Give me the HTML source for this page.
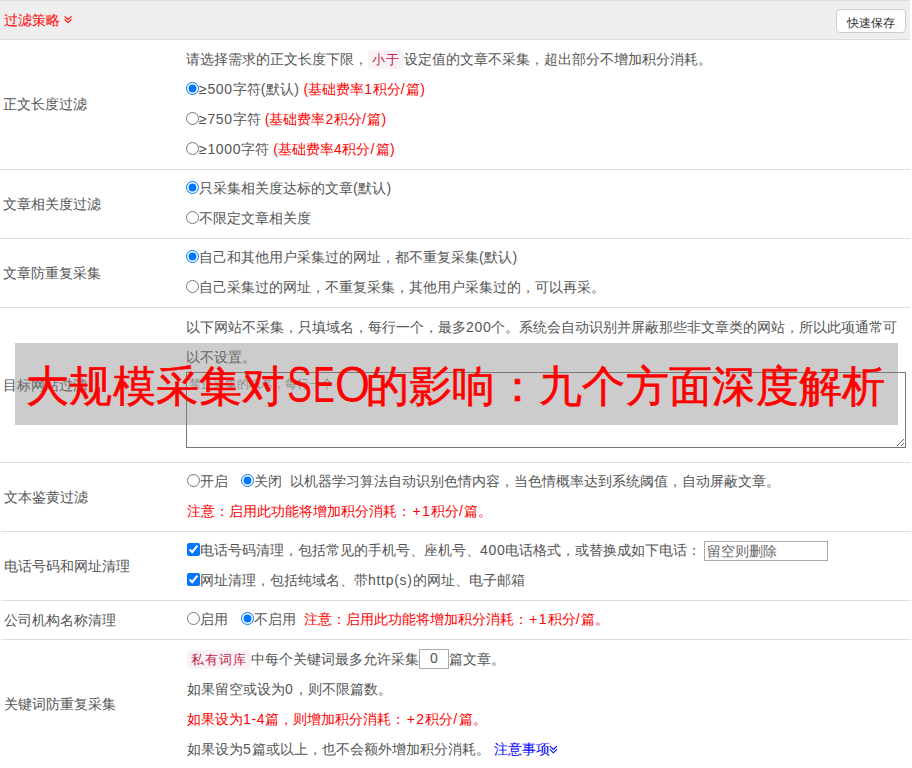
<!DOCTYPE html>
<html><head><meta charset="utf-8">
<style>
html,body{margin:0;padding:0;background:#fff;}
body{width:912px;height:768px;overflow:hidden;position:relative;font-family:"Liberation Sans",sans-serif;font-size:14px;color:#555;}
.hdr{position:absolute;left:0;top:0;width:910px;height:38px;background:#eee;border-top:1px solid #ddd;border-bottom:1px solid #ddd;}
.hdr .t{position:absolute;left:4px;top:4px;line-height:30px;color:#f00;white-space:nowrap;}
.hdr svg{position:absolute;left:64px;top:14px;}
.btn{position:absolute;left:836px;top:8px;width:68px;height:22px;border:1px solid #ccc;border-radius:4px;background:#fff;color:#333;font-size:12px;line-height:26px;text-align:center;}
.row{position:absolute;left:0;width:910px;border-bottom:1px solid #ddd;}
.lab{position:absolute;left:3px;line-height:30px;white-space:nowrap;}
.ln{position:absolute;left:186px;line-height:30px;white-space:nowrap;}
.red{color:#f00;}
.l{letter-spacing:0.7px;}
input[type=radio],input[type=checkbox]{margin:0;vertical-align:middle;position:relative;top:-2px;}
input.sp{margin-left:13px;}
code{font-family:"Liberation Sans",sans-serif;font-size:13px;letter-spacing:1px;color:#c7254e;background:#f9f2f4;border-radius:4px;padding:2px 4px 2px 4px;}
.banner{position:absolute;left:15px;top:343px;width:883px;height:82px;background:rgba(128,128,128,0.4);}
.banner .bt{position:absolute;left:11px;top:2px;letter-spacing:0.3px;line-height:82px;font-size:43px;color:#f00;white-space:nowrap;-webkit-text-stroke:0.6px #f00;}
.seo{display:inline-block;width:77px;margin-left:3px;}
.lt{position:absolute;top:0;line-height:60px;font-size:50px;color:#f00;transform-origin:0 0;white-space:nowrap;}
textarea{position:absolute;left:186px;top:372px;width:714px;height:69px;margin:0;border:1px solid #777;border-radius:0;padding:3px 2px 2px 2px;font-family:"Liberation Sans",sans-serif;font-size:12px;line-height:16px;resize:both;}
textarea::placeholder{color:#999;}
.inp{position:absolute;border:1px solid #a9a9a9;background:#fff;font-size:14px;color:#666;line-height:18px;white-space:nowrap;}
.blue{color:#00f;}
</style></head><body>
<div class="hdr"><span class="t">过滤策略</span>
<svg width="9" height="9" viewBox="0 0 9 9"><path d="M0.6 1.3 L4.1 4.4 L7.6 1.3 M0.6 4.4 L4.1 7.5 L7.6 4.4" fill="none" stroke="#f00" stroke-width="1.1"/></svg>
<div class="btn">快速保存</div></div>

<div class="row" style="top:40px;height:129px"></div>
<div class="lab" style="top:89px">正文长度过滤</div>
<div class="ln" style="top:44px">请选择需求的正文长度下限，<code>小于</code>设定值的文章不采集，超出部分不增加积分消耗。</div>
<div class="ln" style="top:74px"><input type="radio" checked><span class="l">≥500</span>字符<span class="l">(</span>默认<span class="l">)</span> <span class="red">(基础费率<span class="l">1</span>积分<span style="letter-spacing:1.6px">/</span>篇<span class="l">)</span></span></div>
<div class="ln" style="top:104px"><input type="radio"><span class="l">≥750</span>字符 <span class="red">(基础费率<span class="l">2</span>积分<span style="letter-spacing:1.6px">/</span>篇<span class="l">)</span></span></div>
<div class="ln" style="top:134px"><input type="radio"><span class="l">≥1000</span>字符 <span class="red">(基础费率<span class="l">4</span>积分<span style="letter-spacing:1.6px">/</span>篇<span class="l">)</span></span></div>

<div class="row" style="top:170px;height:68px"></div>
<div class="lab" style="top:189px">文章相关度过滤</div>
<div class="ln" style="top:173px"><input type="radio" checked>只采集相关度达标的文章<span class="l">(</span>默认<span class="l">)</span></div>
<div class="ln" style="top:203px"><input type="radio">不限定文章相关度</div>

<div class="row" style="top:239px;height:68px"></div>
<div class="lab" style="top:258px">文章防重复采集</div>
<div class="ln" style="top:242px"><input type="radio" checked>自己和其他用户采集过的网址，都不重复采集<span class="l">(</span>默认<span class="l">)</span></div>
<div class="ln" style="top:272px"><input type="radio">自己采集过的网址，不重复采集，其他用户采集过的，可以再采。</div>

<div class="row" style="top:308px;height:154px"></div>
<div class="lab" style="top:370px">目标网站过滤</div>
<div class="ln" style="top:312px">以下网站不采集，只填域名，每行一个，最多<span class="l">200</span>个。系统会自动识别并屏蔽那些非文章类的网站，所以此项通常可</div>
<div class="ln" style="top:342px">以不设置。</div>
<textarea placeholder="禁止采集的域名，每行一个"></textarea>

<div style="position:absolute;left:1px;top:0;width:911px;height:768px">
<div class="row" style="top:463px;height:68px"></div>
<div class="lab" style="top:482px">文本鉴黄过滤</div>
<div class="ln" style="top:466px"><input type="radio">开启<input type="radio" checked class="sp">关闭 &nbsp;以机器学习算法自动识别色情内容，当色情概率达到系统阈值，自动屏蔽文章。</div>
<div class="ln red" style="top:496px">注意：启用此功能将增加积分消耗：<span class="l" style="letter-spacing:1.2px;margin-left:1.5px">+1</span>积分<span style="letter-spacing:1.6px">/</span>篇。</div>

<div class="row" style="top:532px;height:68px"></div>
<div class="lab" style="top:551px">电话号码和网址清理</div>
<div class="ln" style="top:535px"><input type="checkbox" checked>电话号码清理，包括常见的手机号、座机号、<span class="l">400</span>电话格式，或替换成如下电话：</div>
<div class="inp" style="left:703px;top:541px;width:120px;height:18px;padding-left:2px;">留空则删除</div>
<div class="ln" style="top:565px"><input type="checkbox" checked>网址清理，包括纯域名、带<span class="l">http(s)</span>的网址、电子邮箱</div>

<div class="row" style="top:601px;height:38px"></div>
<div class="lab" style="top:605px">公司机构名称清理</div>
<div class="ln" style="top:604px"><input type="radio">启用<input type="radio" checked class="sp">不启用 &nbsp;<span class="red">注意：启用此功能将增加积分消耗：<span class="l" style="letter-spacing:1.2px;margin-left:1.5px">+1</span>积分<span style="letter-spacing:1.6px">/</span>篇。</span></div>

<div class="row" style="top:640px;height:140px"></div>
<div class="lab" style="top:689px">关键词防重复采集</div>
<div class="ln" style="top:644px"><code>私有词库</code>中每个关键词最多允许采集<span style="display:inline-block;width:28px;height:18px;border:1px solid #a9a9a9;line-height:17px;text-align:center;vertical-align:middle;position:relative;top:-1px">0</span>篇文章。</div>
<div class="ln" style="top:674px">如果留空或设为<span class="l">0</span>，则不限篇数。</div>
<div class="ln red" style="top:704px">如果设为<span class="l">1-4</span>篇，则增加积分消耗：<span class="l" style="letter-spacing:1.2px;margin-left:1.5px">+2</span>积分<span style="letter-spacing:1.6px">/</span>篇。</div>
<div class="ln" style="top:734px">如果设为<span class="l">5</span>篇或以上，也不会额外增加积分消耗。 <span class="blue" style="margin-left:1px">注意事项</span></div>
<svg style="position:absolute;left:548px;top:745px" width="9" height="9" viewBox="0 0 9 9"><path d="M0.9 1.1 L4.4 4.5 L7.9 1.1 M0.9 4.4 L4.4 7.8 L7.9 4.4" fill="none" stroke="#00f" stroke-width="1.1"/></svg>

</div>
<div class="banner"><div class="bt">大规模采集对<span class="seo"></span>的影响：九个方面深度解析</div></div>
<div class="lt" style="left:287px;top:355px;transform:scaleX(0.75)">S</div>
<div class="lt" style="left:313px;top:355px;transform:scaleX(0.653)">E</div>
<div class="lt" style="left:335px;top:355px;transform:scaleX(0.902)">O</div>
</body></html>
